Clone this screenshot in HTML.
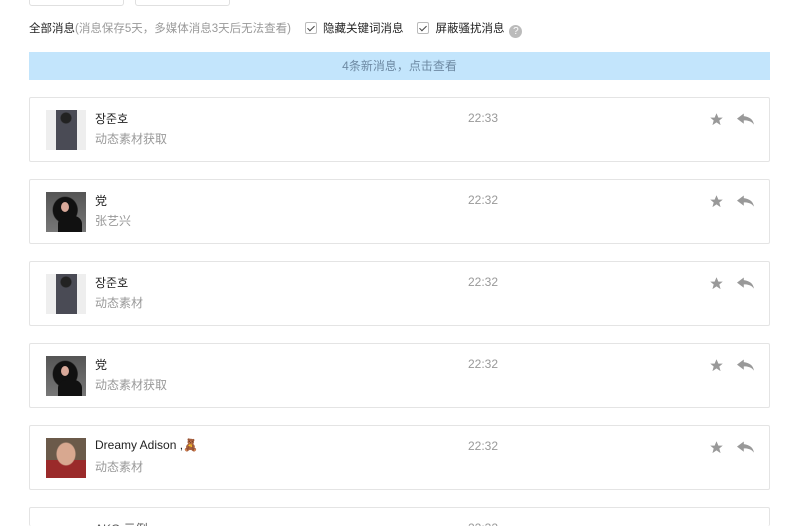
<!DOCTYPE html>
<html><head><meta charset="utf-8"><style>
*{margin:0;padding:0;box-sizing:border-box}
html,body{width:800px;height:526px;overflow:hidden}
body{background:#fff;font-family:"Liberation Sans","Noto Sans CJK SC",sans-serif;font-size:12px;color:#222;position:relative}
.box{position:absolute;top:-4px;height:10px;border:1px solid #e0e0e0;border-top:none;border-radius:0 0 3px 3px}
.filter{position:absolute;left:29px;top:20px;height:18px;line-height:18px;white-space:nowrap;font-size:11.5px}
.filter .g{color:#999}
.cb{display:inline-block;width:12px;height:12px;border:1px solid #bbb;border-radius:2px;vertical-align:-2px;position:relative;margin:0 6px 0 14px}
.cb:after{content:"";position:absolute;left:3px;top:1px;width:3px;height:6px;border:solid #444;border-width:0 1.5px 1.5px 0;transform:rotate(45deg)}
.q{display:inline-block;width:13px;height:13px;border-radius:50%;background:#bbb;color:#fff;font-size:10px;text-align:center;line-height:13px;margin-left:5px;vertical-align:-2px}
.banner{position:absolute;left:29px;top:52px;width:741px;height:28px;background:#c3e5fc;color:#6e8aa3;text-align:center;line-height:28px;font-size:12px}
.card{position:absolute;left:29px;width:741px;height:65px;border:1px solid #e4e4e4;border-radius:2px;background:#fff;overflow:hidden}
.av{position:absolute;left:16px;top:12px;width:40px;height:40px}
.nm{position:absolute;left:65px;top:12px;font-size:12px;color:#222}
.sub{position:absolute;left:65px;top:32px;font-size:12px;color:#999}
.tm{position:absolute;left:438px;top:13px;font-size:12px;color:#999}
.st{position:absolute;left:679px;top:14px}
.rp{position:absolute;left:707px;top:15px}
</style></head><body>
<div class="box" style="left:29px;width:95px"></div>
<div class="box" style="left:135px;width:95px"></div>
<div class="filter">全部消息<span class="g">(消息保存5天，多媒体消息3天后无法查看)</span><span class="cb"></span>隐藏关键词消息<span class="cb"></span>屏蔽骚扰消息<span class="q">?</span></div>
<div class="banner">4条新消息，点击查看</div>

<div class="card" style="top:97px"><div class="av" style="background:radial-gradient(circle at 50% 20%,#222 0 5px,transparent 6px),linear-gradient(90deg,#eee 0 25%,#4a4b55 25% 78%,#eee 78%)"></div><div class="nm">장준호</div><div class="sub">动态素材获取</div><div class="tm">22:33</div>
<svg class="st" width="15" height="15" viewBox="0 0 24 24"><path d="M12 2l3 7h7l-5.5 4.5 2 7.5L12 16.5 5.5 21l2-7.5L2 9h7z" fill="#999"/></svg>
<svg class="rp" width="17" height="13" viewBox="0 0 20 14"><path d="M8 0L0 6l8 6V8c5 0 9 1 12 5-1-6-5-9-12-10z" fill="#999"/></svg></div>

<div class="card" style="top:179px"><div class="av" style="background:radial-gradient(ellipse at 48% 45%,#111 0 12px,transparent 13px),linear-gradient(#555,#777)"><div style="position:absolute;left:12px;top:24px;width:24px;height:16px;background:#111;border-radius:8px 8px 0 0"></div><div style="position:absolute;left:15px;top:10px;width:8px;height:10px;background:#d9a99a;border-radius:50%"></div></div><div class="nm">党</div><div class="sub">张艺兴</div><div class="tm">22:32</div>
<svg class="st" width="15" height="15" viewBox="0 0 24 24"><path d="M12 2l3 7h7l-5.5 4.5 2 7.5L12 16.5 5.5 21l2-7.5L2 9h7z" fill="#999"/></svg>
<svg class="rp" width="17" height="13" viewBox="0 0 20 14"><path d="M8 0L0 6l8 6V8c5 0 9 1 12 5-1-6-5-9-12-10z" fill="#999"/></svg></div>

<div class="card" style="top:261px"><div class="av" style="background:radial-gradient(circle at 50% 20%,#222 0 5px,transparent 6px),linear-gradient(90deg,#eee 0 25%,#4a4b55 25% 78%,#eee 78%)"></div><div class="nm">장준호</div><div class="sub">动态素材</div><div class="tm">22:32</div>
<svg class="st" width="15" height="15" viewBox="0 0 24 24"><path d="M12 2l3 7h7l-5.5 4.5 2 7.5L12 16.5 5.5 21l2-7.5L2 9h7z" fill="#999"/></svg>
<svg class="rp" width="17" height="13" viewBox="0 0 20 14"><path d="M8 0L0 6l8 6V8c5 0 9 1 12 5-1-6-5-9-12-10z" fill="#999"/></svg></div>

<div class="card" style="top:343px"><div class="av" style="background:radial-gradient(ellipse at 48% 45%,#111 0 12px,transparent 13px),linear-gradient(#555,#777)"><div style="position:absolute;left:12px;top:24px;width:24px;height:16px;background:#111;border-radius:8px 8px 0 0"></div><div style="position:absolute;left:15px;top:10px;width:8px;height:10px;background:#d9a99a;border-radius:50%"></div></div><div class="nm">党</div><div class="sub">动态素材获取</div><div class="tm">22:32</div>
<svg class="st" width="15" height="15" viewBox="0 0 24 24"><path d="M12 2l3 7h7l-5.5 4.5 2 7.5L12 16.5 5.5 21l2-7.5L2 9h7z" fill="#999"/></svg>
<svg class="rp" width="17" height="13" viewBox="0 0 20 14"><path d="M8 0L0 6l8 6V8c5 0 9 1 12 5-1-6-5-9-12-10z" fill="#999"/></svg></div>

<div class="card" style="top:425px"><div class="av" style="background:radial-gradient(ellipse at 50% 40%,#d8a890 0 9px,transparent 10px),linear-gradient(#6b5a4a 0 55%,#9a2a2a 55%)"></div><div class="nm">Dreamy Adison ,<span style="color:#b8782a">🧸</span></div><div class="sub">动态素材</div><div class="tm">22:32</div>
<svg class="st" width="15" height="15" viewBox="0 0 24 24"><path d="M12 2l3 7h7l-5.5 4.5 2 7.5L12 16.5 5.5 21l2-7.5L2 9h7z" fill="#999"/></svg>
<svg class="rp" width="17" height="13" viewBox="0 0 20 14"><path d="M8 0L0 6l8 6V8c5 0 9 1 12 5-1-6-5-9-12-10z" fill="#999"/></svg></div>

<div class="card" style="top:507px;height:19px;border-bottom:none"><div class="nm" style="color:#555">AKG 示例</div><div class="tm">22:32</div></div>
</body></html>
